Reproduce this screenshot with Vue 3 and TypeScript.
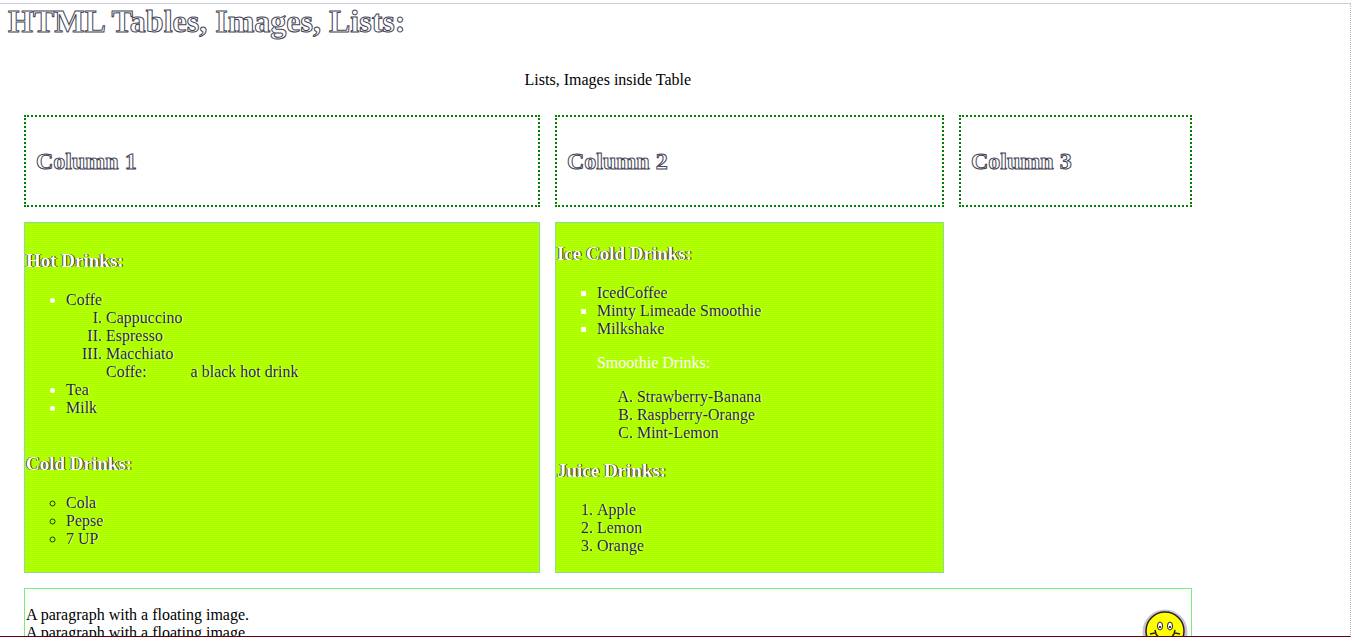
<script setup lang="ts">
const columns: string[] = ['Column 1', 'Column 2', 'Column 3']
const coffees: string[] = ['Cappuccino', 'Espresso', 'Macchiato']
const coldDrinks: string[] = ['Cola', 'Pepse', '7 UP']
const iced: string[] = ['IcedCoffee', 'Minty Limeade Smoothie', 'Milkshake']
const smoothies: string[] = ['Strawberry-Banana', 'Raspberry-Orange', 'Mint-Lemon']
const juices: string[] = ['Apple', 'Lemon', 'Orange']
</script>

<template>
  <main class="page">
    <h1>HTML Tables, Images, Lists:</h1>
    <table>
      <caption>Lists, Images inside Table</caption>
      <colgroup>
        <col class="wide" />
        <col class="medium" />
        <col />
      </colgroup>
      <thead>
        <tr>
          <th v-for="name in columns" :key="name" scope="col"><h2>{{ name }}</h2></th>
        </tr>
      </thead>
      <tbody>
        <tr>
          <td class="menu">
            <h3>Hot Drinks:</h3>
            <ul class="disc">
              <li>
                Coffe
                <ol class="roman">
                  <li v-for="item in coffees" :key="item">{{ item }}</li>
                </ol>
                <dl>
                  <dt>Coffe:</dt>
                  <dd>a black hot drink</dd>
                </dl>
              </li>
              <li>Tea</li>
              <li>Milk<br /><br /></li>
            </ul>
            <h3>Cold Drinks:</h3>
            <ul class="circle">
              <li v-for="item in coldDrinks" :key="item">{{ item }}</li>
            </ul>
          </td>
          <td class="menu">
            <h3>Ice Cold Drinks:</h3>
            <ul class="square">
              <li v-for="item in iced" :key="item">{{ item }}</li>
            </ul>
            <div class="indent">
              <p class="label">Smoothie Drinks:</p>
              <ol class="alpha">
                <li v-for="item in smoothies" :key="item">{{ item }}</li>
              </ol>
            </div>
            <h3>Juice Drinks:</h3>
            <ol>
              <li v-for="item in juices" :key="item">{{ item }}</li>
            </ol>
          </td>
        </tr>
        <tr>
          <td class="note" colspan="3">
            <svg class="smiley" width="52" height="54" viewBox="0 0 52 54" role="img" aria-label="Smiling face">
              <circle class="halo" cx="27" cy="26" r="20" />
              <circle cx="27" cy="25" r="19" fill="#ffff00" stroke="#222" stroke-width="1.5" />
              <ellipse cx="22" cy="20" rx="2.5" ry="4" fill="#fff" stroke="#222" />
              <ellipse cx="32" cy="20" rx="2.5" ry="4" fill="#fff" stroke="#222" />
              <circle cx="22" cy="21" r="1" />
              <circle cx="32" cy="21" r="1" />
              <path d="M12 28l5-1M17 24l1 4Q27 42 36 28l1-4M37 27l5 1" fill="none" stroke="#222" stroke-width="1.5" />
            </svg>
            <p>A paragraph with a floating image.<br />A paragraph with a floating image.</p>
          </td>
        </tr>
      </tbody>
    </table>
    <div class="frame" aria-hidden="true"></div>
  </main>
</template>

<style>
body {
  margin: 0;
  background: #fff;
}
</style>

<style scoped>
.page {
  box-sizing: border-box;
  height: 100vh;
  overflow: hidden;
  padding: 3px 10px 0 8px;
  font: 16px/18px "Liberation Serif", "Times New Roman", serif;
  color: #000;
}
h1, h2 {
  color: #fff;
  -webkit-text-stroke: 1px #445;
}
h1 {
  margin: 0 0 32px;
  font-size: 32px;
  line-height: 36px;
}
h2 {
  margin: 20px 0;
  font-size: 24px;
  line-height: 28px;
}
h3 {
  margin: 18px 0 20px;
  color: #fff;
  font-size: 19px;
  line-height: 21px;
  text-shadow: 1px 0 #330, -1px 0 #552;
}
table {
  width: 90%;
  table-layout: fixed;
  border: 1px solid transparent;
  border-spacing: 15px;
}
caption {
  padding-bottom: 10px;
}
.wide {
  width: 45.35%;
}
.medium {
  width: 34.2%;
}
th {
  padding: 10px;
  border: 2px dotted green;
  text-align: left;
}
td {
  padding: 1px;
}
.menu {
  padding-top: 2px;
  border: 1px solid #88dd99;
  background: repeating-linear-gradient(#a6ff00 0 1px, #b8ff00 1px 2px);
}
.menu li {
  color: #230;
  text-shadow: 1px 0 #fff;
}
.note {
  border: 1px solid #77ee77;
}
ul, ol {
  margin: 16px 0;
  padding-left: 40px;
}
li ol, dl {
  margin: 0;
}
.roman {
  list-style: upper-roman;
}
.circle {
  list-style: circle;
}
.square {
  list-style: square;
}
.alpha {
  list-style: upper-alpha;
}
.disc > li::marker,
.square > li::marker {
  color: #fff;
}
dl {
  display: flex;
  padding-left: 40px;
}
dd {
  margin-left: 44px;
}
.indent {
  padding-left: 40px;
}
.label {
  color: #fff;
}
p {
  margin: 16px 0;
}
.smiley {
  float: right;
  margin: 16px 0 0;
}
.halo {
  fill: none;
  stroke: #c9c4d2;
  stroke-width: 5;
}
.frame {
  position: fixed;
  inset: 3px 0 0;
  border-top: 1px solid #ccd;
  border-right: 1px dotted #caa;
  border-bottom: 1px solid #600010;
  pointer-events: none;
}
</style>
